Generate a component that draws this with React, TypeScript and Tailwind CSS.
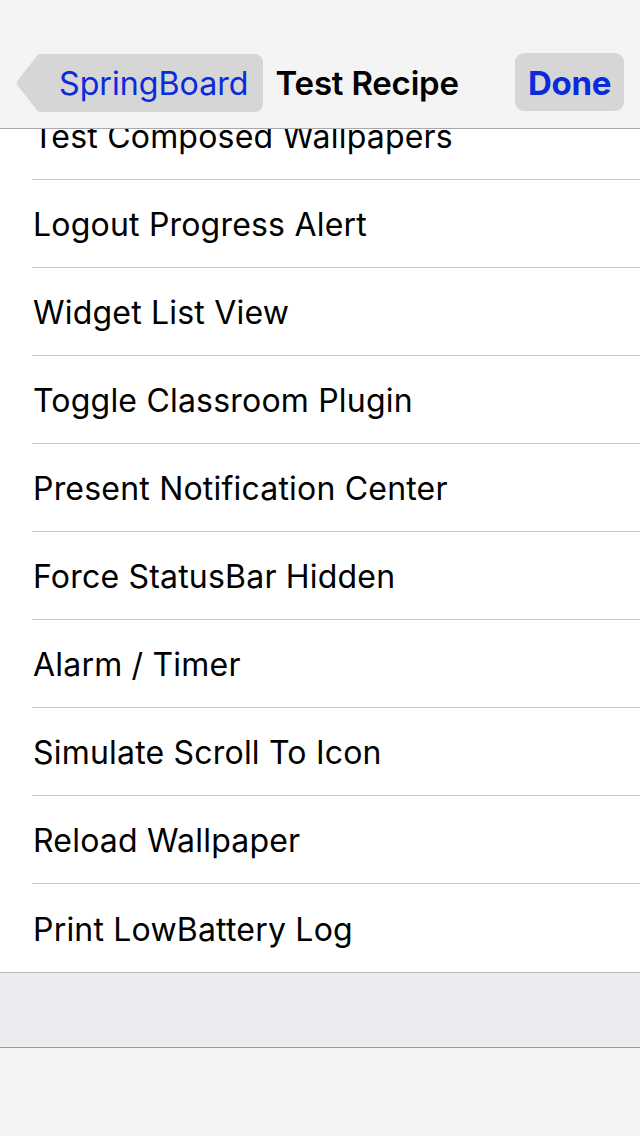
import React from 'react';

const rows = [
    'Test Composed Wallpapers',
    'Logout Progress Alert',
    'Widget List View',
    'Toggle Classroom Plugin',
    'Present Notification Center',
    'Force StatusBar Hidden',
    'Alarm / Timer',
    'Simulate Scroll To Icon',
    'Reload Wallpaper',
    'Print LowBattery Log',
];

const App: React.FC = () => {
    return (
        <div
            className="w-[640px] h-[1136px] flex flex-col bg-[#f4f4f4] overflow-hidden"
            style={{ fontFamily: 'Inter, "Liberation Sans", sans-serif' }}
        >
            {/* nav bar */}
            <div className="h-[129px] shrink-0 border-b border-[#a9a9ad] bg-[#f4f4f4] flex items-start pt-[53px] pl-[16px] pr-[16px]">
                <div className="flex items-stretch h-[58px] mt-[1px]">
                    <svg width="27" height="58" viewBox="0 0 27 58" className="block">
                        <path d="M27 0 L25 0 Q23 0 21.5 1.3 L1.2 27 Q0 29 1.2 31 L21.5 56.7 Q23 58 25 58 L27 58 Z" fill="#d6d6d6" />
                    </svg>
                    <div className="bg-[#d6d6d6] rounded-r-[8px] flex items-center pl-[16px] pr-[14px] pt-[3px] text-[32.2px] text-[#0a2bdb]">
                        SpringBoard
                    </div>
                </div>
                <div className="h-[58px] flex items-center ml-[13px] pt-[4px] text-[33px] font-semibold text-black tracking-[-0.2px]">
                    Test Recipe
                </div>
                <div className="ml-auto h-[58px] px-[13px] pt-[3px] rounded-[9px] bg-[#d6d6d6] flex items-center text-[33px] font-bold text-[#0a2bdb] tracking-[-0.3px]">
                    Done
                </div>
            </div>

            {/* list */}
            <div className="flex-1 flex flex-col overflow-hidden">
                <div className="-mt-[37px] bg-white border-b border-[#b8b8bc]">
                    {rows.map((r, i) => (
                        <div key={r} className="pl-[32px]">
                            <div
                                className={
                                    'h-[88px] flex items-center pl-px pt-[3px] text-[32px] text-black tracking-[0.2px] ' +
                                    (i < rows.length - 1 ? 'border-b border-[#c6c6ca]' : '')
                                }
                            >
                                {r}
                            </div>
                        </div>
                    ))}
                </div>
                <div className="h-[75px] shrink-0 bg-[#ebebf0] border-b border-[#9a9aa0]" />
                <div className="flex-1 bg-[#f4f4f4]" />
            </div>
        </div>
    );
};

export default App;
